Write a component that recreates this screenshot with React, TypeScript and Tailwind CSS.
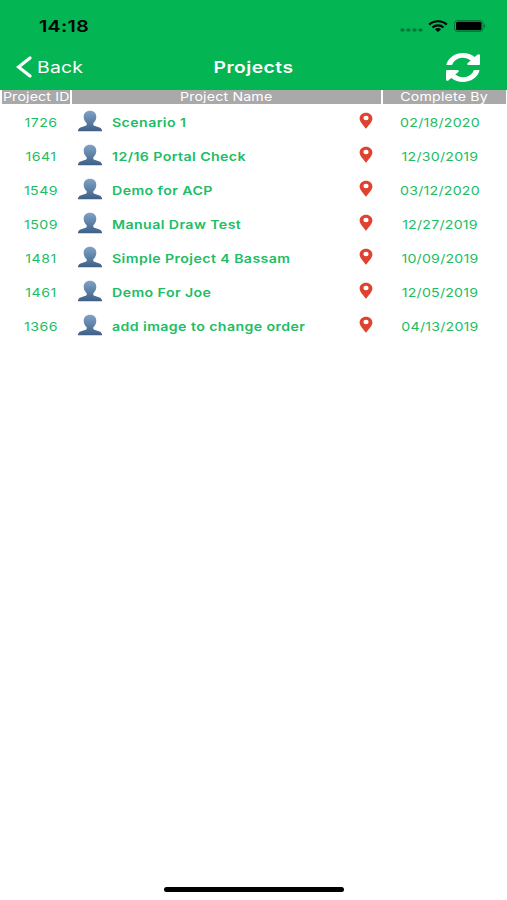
import React from 'react';

const projects = [
  { id: 1726, name: 'Scenario 1', due: '02/18/2020' },
  { id: 1641, name: '12/16 Portal Check', due: '12/30/2019' },
  { id: 1549, name: 'Demo for ACP', due: '03/12/2020' },
  { id: 1509, name: 'Manual Draw Test', due: '12/27/2019' },
  { id: 1481, name: 'Simple Project 4 Bassam', due: '10/09/2019' },
  { id: 1461, name: 'Demo For Joe', due: '12/05/2019' },
  { id: 1366, name: 'add image to change order', due: '04/13/2019' },
];

function StatusBar() {
  return (
    <div className="flex h-[44px] items-start justify-between pl-[39px] pr-[21px] pt-[14px] text-black">
      <span className="origin-left scale-x-[1.22] text-[16px] font-semibold leading-6 tracking-[0.3px]">14:18</span>
      <div className="flex h-6 items-center">
        <svg width="23" height="12" viewBox="0 0 23 12" className="mr-[5px] fill-black/35">
          <rect x="0.5" y="8.500" width="4" height="3" rx="1.2" />
          <rect x="6.500" y="8.500" width="4" height="3" rx="1.2" />
          <rect x="12.500" y="8.500" width="4" height="3" rx="1.2" />
          <rect x="18.500" y="8.500" width="4" height="3" rx="1.2" />
        </svg>
        <svg width="20" height="12" viewBox="0 0 20 12" fill="none" stroke="#000" strokeWidth="2.2" className="mr-[6px]">
          <path d="M1.2 4.6C6 .1 14 .1 18.8 4.6" />
          <path d="M4.5 7.5C7.5 4.7 12.5 4.7 15.5 7.5" />
          <path d="M10 12 6.9 9.2C8.5 7.7 11.5 7.7 13.1 9.2Z" fill="#000" stroke="none" />
        </svg>
        <svg width="32" height="12" viewBox="0 0 32 12">
          <rect x="0.5" y="0.5" width="28.500" height="11" rx="3" fill="none" stroke="#000" strokeOpacity=".35" />
          <rect x="2" y="1.700" width="25.500" height="8.600" rx="1.5" />
          <path d="M30 4v4c1.6-.6 1.6-3.400 0-4" fillOpacity=".4" />
        </svg>
      </div>
    </div>
  );
}

function RefreshIcon() {
  return (
    <svg width="34" height="29" viewBox="0 0 1536 1536" preserveAspectRatio="none" fill="currentColor">
      <path d="M1511 928q0 5-1 7-64 268-268 434.500T764 1536q-146 0-282.500-55T238 1324l-129 129q-19 19-45 19t-45-19-19-45V960q0-26 19-45t45-19h448q26 0 45 19t19 45-19 45l-137 137q71 66 161 102t187 36q134 0 250-65t186-179q11-17 53-117 8-23 30-23h192q13 0 22.500 9.500t9.500 22.500zm25-800v448q0 26-19 45t-45 19h-448q-26 0-45-19t-19-45 19-45l138-138Q969 256 768 256q-134 0-250 65T332 500q-11 17-53 117-8 23-30 23H50q-13 0-22.500-9.500T18 608v-7q65-268 270-434.500T768 0q146 0 284 55.500T1297 212l130-129q19-19 45-19t45 19 19 45z" />
    </svg>
  );
}

function PersonIcon() {
  return (
    <svg width="26" height="22" viewBox="0 0 26 22">
      <defs>
        <linearGradient id="person" x1="0" y1="0" x2="0" y2="1">
          <stop offset="0" stopColor="#7fa2c6" />
          <stop offset="1" stopColor="#3e6087" />
        </linearGradient>
      </defs>
      <path
        fill="url(#person)"
        d="M13 .8c4 0 6.500 2.600 6.300 6.200-.1 2.700-1.300 4.700-3 6.200v1.300c0 1 1.200 1.400 3.300 1.900 3.400.700 5.400 1.900 5.600 4.800H.8c.2-2.900 2.200-4.100 5.600-4.800 2.100-.5 3.300-.9 3.300-1.900v-1.300c-1.700-1.500-2.900-3.500-3-6.200C6.500 3.400 9 .8 13 .8Z"
      />
    </svg>
  );
}

function PinIcon() {
  return (
    <svg width="14" height="18" viewBox="0 0 14 18">
      <path fill="#df4330" d="M7 .8c3.700 0 6.400 2.500 6.400 5.700 0 3.500-3.600 6.400-6.400 10.300C4.200 12.900.6 10 .6 6.500.6 3.300 3.300.8 7 .8Z" />
      <ellipse cx="7" cy="6" rx="2.600" ry="2.200" fill="#fff" />
    </svg>
  );
}

export default function App() {
  return (
    <div className="flex h-[900px] w-[507px] flex-col overflow-hidden bg-white font-['Inter','Liberation_Sans',sans-serif]">
      <header className="h-[90px] bg-[#03b553]">
        <StatusBar />
        <div className="grid h-[46px] grid-cols-3 items-center text-white">
          <button className="flex items-center pl-4">
            <svg width="16" height="22" viewBox="0 0 16 22" fill="none" stroke="#fff" strokeWidth="3.200" strokeLinecap="round">
              <path d="M14 2 2.500 11 14 20" />
            </svg>
            <span className="ml-[5px] origin-left scale-x-[1.21] text-[16px] tracking-[0.2px]">Back</span>
          </button>
          <h1 className="scale-x-[1.2] text-center text-[16px] font-semibold tracking-[0.4px]">Projects</h1>
          <button className="flex justify-end pr-[27px]">
            <RefreshIcon />
          </button>
        </div>
      </header>

      <div className="flex h-[14px] gap-[2px] pl-[2px] pr-px text-center text-[12px] leading-[14px] tracking-[0.15px] text-white">
        <div className="w-[68px] bg-[#a9a9a9]">
          <span className="inline-block origin-center scale-x-[1.18] whitespace-nowrap">Project ID</span>
        </div>
        <div className="w-[309px] bg-[#a9a9a9]">
          <span className="inline-block scale-x-[1.18]">Project Name</span>
        </div>
        <div className="flex-1 bg-[#a9a9a9]">
          <span className="inline-block scale-x-[1.18]">Complete By</span>
        </div>
      </div>

      <ul className="flex-1 pt-[2px] text-[12px] text-[#20bd65]">
        {projects.map((project) => (
          <li key={project.id} className="flex h-[34px] items-center">
            <span className="ml-[5px] w-[72px] scale-x-[1.18] text-center tracking-[0.4px]">{project.id}</span>
            <div className="-mt-1 w-[35px]">
              <PersonIcon />
            </div>
            <span className="w-[247px] whitespace-nowrap">
              <span className="inline-block origin-left scale-x-[1.18] font-semibold tracking-[0.35px]">{project.name}</span>
            </span>
            <div className="-mt-1 w-[14px]">
              <PinIcon />
            </div>
            <span className="flex-1 scale-x-[1.18] text-center tracking-[0.2px]">{project.due}</span>
          </li>
        ))}
      </ul>

      <div className="mx-auto mb-2 h-[5px] w-[180px] rounded-full bg-black" />
    </div>
  );
}
